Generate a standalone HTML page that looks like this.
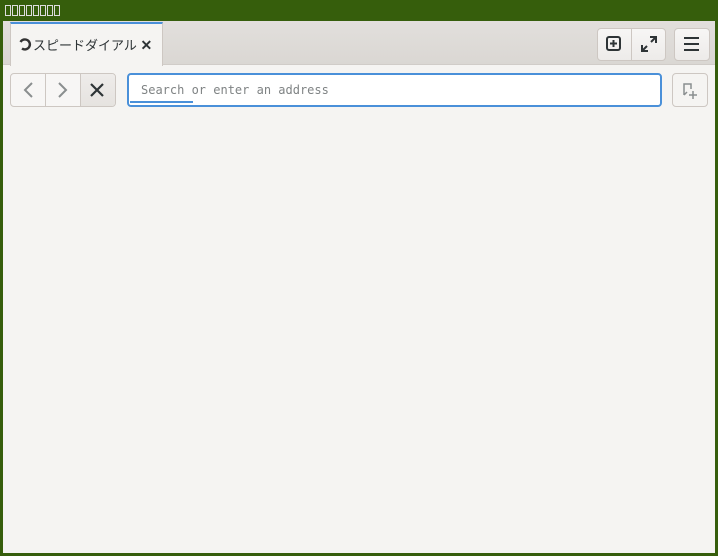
<html><head><style>
body{margin:0;width:718px;height:556px;background:#365e0c;position:relative;overflow:hidden;font-family:"Liberation Sans","Noto Sans CJK JP",sans-serif}
.a{position:absolute;box-sizing:border-box}
.btn{background:linear-gradient(#f7f6f5,#edebe9);border:1px solid #cdc7c2;border-radius:4px}
</style></head><body>
<div class="a" style="left:5px;top:5px;display:flex;gap:1px">
<span style="width:6px;height:11px;border:1px solid #ddd;box-sizing:border-box"></span><span style="width:6px;height:11px;border:1px solid #ddd;box-sizing:border-box"></span><span style="width:6px;height:11px;border:1px solid #ddd;box-sizing:border-box"></span><span style="width:6px;height:11px;border:1px solid #ddd;box-sizing:border-box"></span><span style="width:6px;height:11px;border:1px solid #ddd;box-sizing:border-box"></span><span style="width:6px;height:11px;border:1px solid #ddd;box-sizing:border-box"></span><span style="width:6px;height:11px;border:1px solid #ddd;box-sizing:border-box"></span><span style="width:6px;height:11px;border:1px solid #ddd;box-sizing:border-box"></span>
</div>
<div class="a" style="left:3px;top:21px;width:712px;height:532px;background:#f5f4f2"></div>
<div class="a" style="left:3px;top:21px;width:712px;height:44px;background:linear-gradient(#e2dfdc,#dad7d3);border-bottom:1px solid #d0ccc8"></div>
<div class="a" style="left:10px;top:22px;width:153px;height:44px;background:#f5f4f2;border-left:1px solid #cdc7c2;border-right:1px solid #cdc7c2;border-top:2px solid #4a90d9"></div>
<svg class="a" style="left:18px;top:37px" width="14" height="14" viewBox="0 0 14 14"><path d="M2.5 5 A5 5 0 1 1 4 11.5" fill="none" stroke="#333" stroke-width="2.4"/></svg>
<div class="a" style="left:33px;top:35px;font-size:13px;color:#2e3436">スピードダイアル <b style="font-size:14px">✕</b></div>
<div class="a btn" style="left:597px;top:28px;width:69px;height:33px"></div>
<div class="a" style="left:631px;top:29px;width:1px;height:31px;background:#cdc7c2"></div>
<div class="a btn" style="left:674px;top:28px;width:36px;height:33px"></div>
<svg class="a" style="left:605px;top:35px" width="18" height="18"><rect x="2" y="2" width="13" height="13" rx="2" fill="none" stroke="#2e3436" stroke-width="2"/><path d="M8.5 5v7M5 8.5h7" stroke="#2e3436" stroke-width="2"/></svg>
<svg class="a" style="left:640px;top:35px" width="18" height="18"><path d="M10 2h6v6M16 2l-5 5M8 16H2v-6M2 16l5-5" stroke="#2e3436" stroke-width="2" fill="none"/></svg>
<svg class="a" style="left:683px;top:36px" width="18" height="16"><path d="M1 2h15M1 8h15M1 14h15" stroke="#2e3436" stroke-width="2"/></svg>
<div class="a" style="left:10px;top:73px;width:106px;height:34px;border:1px solid #cdc7c2;border-radius:4px;background:#f7f6f5"></div>
<div class="a" style="left:45px;top:74px;width:1px;height:32px;background:#cdc7c2"></div>
<div class="a" style="left:80px;top:74px;width:35px;height:32px;background:linear-gradient(#eeecea,#e6e3e0);border-left:1px solid #cdc7c2;border-radius:0 3px 3px 0"></div>
<svg class="a" style="left:20px;top:81px" width="16" height="18"><path d="M12 2L5 9l7 7" stroke="#8a8e8f" stroke-width="2" fill="none"/></svg>
<svg class="a" style="left:55px;top:81px" width="16" height="18"><path d="M4 2l7 7-7 7" stroke="#8a8e8f" stroke-width="2" fill="none"/></svg>
<svg class="a" style="left:90px;top:83px" width="14" height="14"><path d="M1 1l12 12M13 1L1 13" stroke="#2e3436" stroke-width="2.2"/></svg>
<div class="a" style="left:127px;top:73px;width:535px;height:34px;border:2px solid #4a90d9;border-radius:4px;background:#fff"></div>
<div class="a" style="left:130px;top:101px;width:63px;height:2px;background:#4a90d9"></div>
<div class="a" style="left:141px;top:83px;font-family:'DejaVu Sans Mono','Liberation Mono',monospace;font-size:12px;color:#7f8384">Search or enter an address</div>
<div class="a" style="left:672px;top:73px;width:36px;height:34px;border:1px solid #cdc7c2;border-radius:4px;background:#f5f4f2"></div>
<svg class="a" style="left:680px;top:81px" width="20" height="20"><path d="M4 14V3h7v5M4 14l3-3" stroke="#8a8e8f" stroke-width="1.5" fill="none"/><path d="M13 10v8M9 14h8" stroke="#8a8e8f" stroke-width="1.5"/></svg>
</body></html>
